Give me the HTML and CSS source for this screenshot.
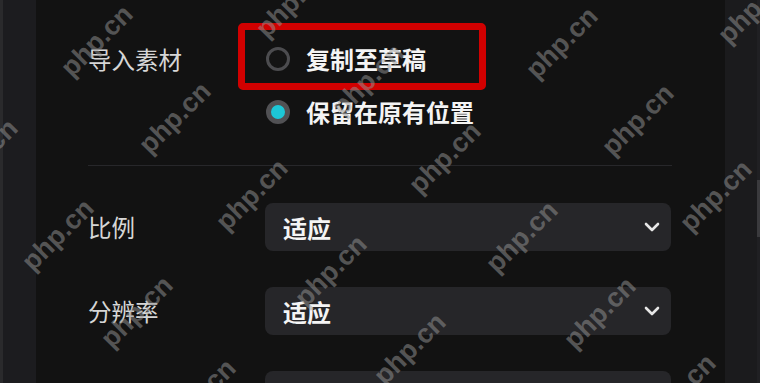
FILE: index.html
```html
<!DOCTYPE html>
<html lang="zh-CN">
<head>
    <meta charset="UTF-8">
    <meta name="viewport" content="width=device-width, initial-scale=1.0">
    <title>导入设置</title>
    <link rel="stylesheet" href="styles.css">
</head>
<body>
    <div class="app">
        <aside class="side-left"></aside>

        <main class="panel">
            <section class="import-row">
                <div class="label">导入素材</div>
                <div class="options">
                    <label class="option highlight">
                        <span class="radio"></span>
                        <span class="option-text">复制至草稿</span>
                    </label>
                    <label class="option">
                        <span class="radio checked"></span>
                        <span class="option-text">保留在原有位置</span>
                    </label>
                </div>
            </section>

            <div class="divider"></div>

            <!-- project settings -->
            <div class="fields">
                <div class="field-row">
                    <div class="label">比例</div>
                    <div class="select">
                        <span>适应</span>
                        <svg class="chevron" width="16" height="10" viewBox="0 0 16 10"><path d="M2 2 L8 8 L14 2" fill="none" stroke="#e6e6e6" stroke-width="2.6" stroke-linecap="round" stroke-linejoin="round"/></svg>
                    </div>
                </div>
                <div class="field-row">
                    <div class="label">分辨率</div>
                    <div class="select">
                        <span>适应</span>
                        <svg class="chevron" width="16" height="10" viewBox="0 0 16 10"><path d="M2 2 L8 8 L14 2" fill="none" stroke="#e6e6e6" stroke-width="2.6" stroke-linecap="round" stroke-linejoin="round"/></svg>
                    </div>
                </div>
                <div class="field-row">
                    <div class="label">草稿帧率</div>
                    <div class="select">
                        <span>30.00帧/秒</span>
                        <svg class="chevron" width="16" height="10" viewBox="0 0 16 10"><path d="M2 2 L8 8 L14 2" fill="none" stroke="#e6e6e6" stroke-width="2.6" stroke-linecap="round" stroke-linejoin="round"/></svg>
                    </div>
                </div>
            </div>
        </main>

        <aside class="side-right">
            <div class="scrollbar"><div class="thumb"></div></div>
        </aside>
    </div>

    <div class="watermarks" id="watermarks"></div>

    <script>
        // watermark centres
        const marks = [
            [97, 41], [175, 118], [292, 2], [368, 80], [252, 195], [58, 235],
            [137, 312], [200, 395], [331, 271], [410, 349], [445, 158], [522, 237],
            [600, 313], [680, 390], [562, 43], [638, 120], [716, 196], [754, 8], [-18, 155]
        ];
        const layer = document.getElementById('watermarks');
        marks.forEach(([x, y]) => {
            const span = document.createElement('span');
            span.className = 'wm';
            span.textContent = 'php.cn';
            span.style.left = x + 'px';
            span.style.top = y + 'px';
            layer.appendChild(span);
        });
    </script>
</body>
</html>
```

FILE: styles.css
```css
body {
    margin: 0;
    background: #121212;
    font-family: "Noto Sans CJK SC", "Noto Sans", sans-serif;
    height: 383px;
    overflow: hidden;
    position: relative;
}

.app {
    display: flex;
    height: 383px;
}

.side-left {
    width: 33px;
    background: #1c1c1f;
    border-left: 3px solid #2a2a2c;
}

.side-right {
    width: 35px;
    display: flex;
    justify-content: flex-end;
    background: #1b1b1d;
}

.scrollbar {
    width: 3px;
    background: #202023;
    padding-top: 180px;
}

.thumb {
    height: 57px;
    background: #3a3a3d;
}

.panel {
    flex: 1;
    padding: 41px 0 0 52px;
}

.label {
    width: 177px;
    flex-shrink: 0;
    color: #d6d6d6;
    font-size: 23.5px;
    line-height: 36px;
}

.import-row {
    display: flex;
}

.options {
    display: flex;
    flex-direction: column;
    gap: 17px;
}

.option {
    display: flex;
    align-items: center;
    gap: 16px;
    height: 36px;
    padding-left: 1px;
    position: relative;
}

/* red annotation frame */
.option.highlight::after {
    content: "";
    position: absolute;
    left: -27px;
    top: -18px;
    width: 248px;
    height: 67px;
    box-sizing: border-box;
    border: 7px solid #d10000;
    border-radius: 5px;
}

.radio {
    width: 24px;
    height: 24px;
    box-sizing: border-box;
    border: 3px solid #4c4c4f;
    border-radius: 50%;
    background: #141414;
}

.radio.checked {
    border-width: 5px;
    border-color: #515154;
    background: #1dc7d6;
}

.option-text {
    color: #f4f4f4;
    font-size: 24px;
    font-weight: bold;
    line-height: 36px;
}

.divider {
    height: 1px;
    width: 584px;
    background: #27272a;
    margin-top: 35px;
}

.fields {
    margin-top: 37px;
    display: flex;
    flex-direction: column;
    gap: 36px;
}

.field-row {
    display: flex;
    align-items: center;
}

.select {
    width: 406px;
    height: 48px;
    box-sizing: border-box;
    padding: 0 11px 0 18px;
    border-radius: 8px;
    background: #262629;
    display: flex;
    align-items: center;
    justify-content: space-between;
    color: #f4f4f4;
    font-size: 24px;
    font-weight: bold;
}

.watermarks {
    position: absolute;
    inset: 0;
    pointer-events: none;
}

.wm {
    position: absolute;
    transform: translate(-50%, -50%) rotate(-45deg);
    font-family: "Liberation Sans", sans-serif;
    font-weight: bold;
    font-size: 27px;
    color: rgba(150, 150, 150, 0.5);
    white-space: nowrap;
}
```
